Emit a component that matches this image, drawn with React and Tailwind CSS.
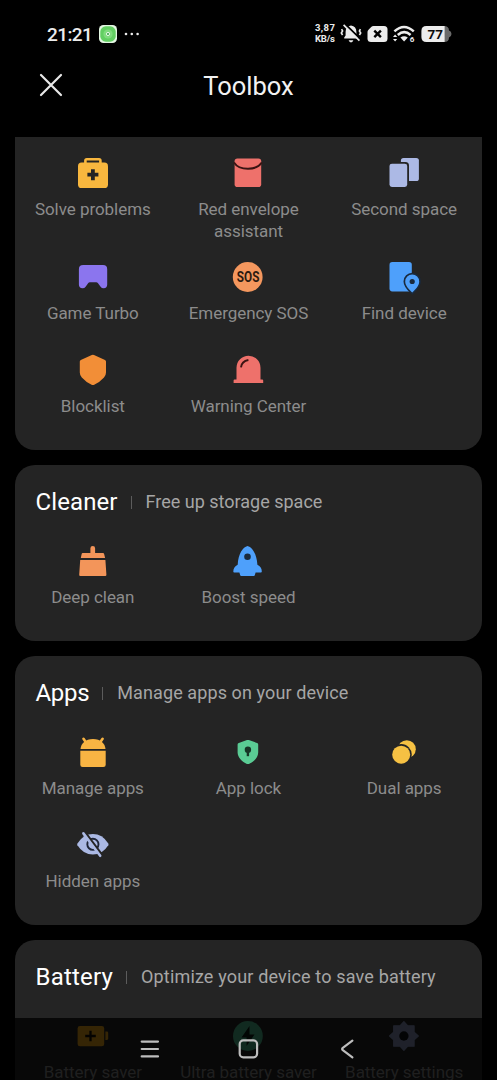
import React from "react";

const BG = "#242424";

function Icon({ children }) {
  return (
    <svg width="30" height="30" viewBox="0 0 30 30" className="block shrink-0 overflow-visible" fill="none">
      {children}
    </svg>
  );
}

const icons = {
  medkit: (
    <Icon>
      <path d="M7.4 6V2.6Q7.4 1.3 8.8 1.3H21Q22.4 1.3 22.4 2.6V6" stroke="#f8b73e" strokeWidth="2.6" />
      <rect x="0" y="4.6" width="30" height="25.4" rx="3.6" fill="#f8b73e" />
      <path d="M9.4 16.7H20.4M14.9 11.2V22.2" stroke={BG} strokeWidth="3.8" strokeLinecap="butt" />
    </Icon>
  ),
  envelope: (
    <Icon>
      <rect x="1.6" y="0.4" width="26.6" height="28.6" rx="2.8" fill="#ee716b" />
      <path d="M1 4.4Q5 10.7 15 10.7T28.8 4.6" stroke="#3a1413" strokeWidth="1.9" />
    </Icon>
  ),
  space: (
    <Icon>
      <rect x="11.9" y="0" width="18" height="23" rx="2.6" fill="#acb9e5" />
      <rect x="-1.3" y="4" width="21.3" height="26.8" rx="3.6" fill={BG} />
      <rect x="0.5" y="5.7" width="17.7" height="23.3" rx="2.4" fill="#acb9e5" />
    </Icon>
  ),
  game: (
    <Icon>
      <path
        d="M5.2 3H25Q29.2 3 29.2 7.2V22.6Q29.2 26.3 25.7 26.3Q23.6 26.3 22.6 24.8L20 21.2Q19.3 20.3 18.2 20.3H11.9Q10.8 20.3 10.1 21.2L7.6 24.8Q6.5 26.3 4.5 26.3Q0.9 26.3 0.9 22.6V7.2Q0.9 3 5.2 3Z"
        fill="#8b75ee"
      />
    </Icon>
  ),
  sos: (
    <Icon>
      <circle cx="14.7" cy="15" r="14.9" fill="#f4975e" />
      <text
        x="3.8"
        y="20.4"
        textLength="22.6"
        lengthAdjust="spacingAndGlyphs"
        className="font-[Roboto,sans-serif] text-[15.5px] font-bold"
        fill="#2c1a10"
      >
        SOS
      </text>
    </Icon>
  ),
  find: (
    <Icon>
      <rect x="0.5" y="0.1" width="22.3" height="29.3" rx="2.8" fill="#4ea0fb" />
      <path
        d="M23.2 30.4C20.5 28 16.2 24 16.2 19.5A7 7 0 0 1 30.2 19.5C30.2 24 26 28 23.2 30.4Z"
        fill="#4ea0fb"
        stroke="#1a2a3d"
        strokeWidth="3.4"
        paintOrder="stroke"
      />
      <circle cx="23.2" cy="19.5" r="2.6" fill="#1a2a3d" />
    </Icon>
  ),
  shield: (
    <Icon>
      <path
        d="M13.8 0Q14.9 -0.5 16 0L27 4.9Q28 5.4 28 6.6V17.5Q28 20.3 26 22.5Q22 27 16.2 29.7Q14.9 30.2 13.6 29.7Q7.8 27 3.8 22.5Q1.8 20.3 1.8 17.5V6.6Q1.8 5.4 2.8 4.9Z"
        fill="#f28e37"
      />
    </Icon>
  ),
  siren: (
    <Icon>
      <path
        d="M3.5 24.6V12.7A12 12 0 0 1 27.5 12.7V24.6H29.2Q30.2 24.6 30.2 25.6V27.9H0.6V25.6Q0.6 24.6 1.6 24.6Z"
        fill="#ee716b"
      />
      <path d="M8 12.3Q8.7 6.2 15.4 5" stroke="#3a1413" strokeWidth="1.9" />
    </Icon>
  ),
  broom: (
    <Icon>
      <path
        d="M3.6 8.2Q3.7 7 4.9 7H12.4V2.3A2.35 2.35 0 0 1 17.1 2.3V7H24.9Q26 7 26.2 8.2L27.1 12H2.8Z"
        fill="#f3955a"
      />
      <path d="M2.2 14H27.4L28.4 28.8Q28.4 30 27.3 30H2.3Q1.1 30 1.2 28.8Z" fill="#f3955a" />
    </Icon>
  ),
  rocket: (
    <Icon>
      <path
        d="M14.5 0C19 1 23.7 7.5 24.4 18.8Q28.8 21 28.8 25.5Q28.8 26.4 27.9 26.4H22.6L21.8 29.2Q21.6 30 20.8 30H8.2Q7.4 30 7.2 29.2L6.4 26.4H1.2Q0.3 26.4 0.3 25.5Q0.4 21 4.7 18.8C5.3 7.5 10 1 14.5 0Z"
        fill="#4ea0fb"
      />
      <circle cx="14.5" cy="10.7" r="3.3" fill="#1a2a3d" />
    </Icon>
  ),
  android: (
    <Icon>
      <path d="M5.5 1.8L8.4 6M24.6 1.8L21.7 6" stroke="#f8b443" strokeWidth="2.6" strokeLinecap="round" />
      <path d="M2.5 12C3 6.5 7.3 2 15 2S27 6.5 27.5 12Z" fill="#f8b443" />
      <path d="M2.3 13.8H27.7V27.7Q27.7 30 25.4 30H4.6Q2.3 30 2.3 27.7Z" fill="#f8b443" />
    </Icon>
  ),
  lock: (
    <Icon>
      <path
        d="M14 3.1Q14.9 2.8 15.8 3.1L24 5.9Q25.2 6.3 25.2 7.6V15.5C25.2 20.5 20.5 25 15.9 26.9Q14.9 27.3 13.9 26.9C9.2 25 4.6 20.5 4.6 15.5V7.6Q4.6 6.3 5.8 5.9Z"
        fill="#5acb94"
      />
      <circle cx="14.9" cy="12.8" r="3.2" fill="#173426" />
      <path d="M14.9 13V19.2" stroke="#173426" strokeWidth="2.4" />
    </Icon>
  ),
  dual: (
    <Icon>
      <circle cx="17.8" cy="12.2" r="9" fill="#f6c143" />
      <circle cx="12.2" cy="17.7" r="10.6" fill={BG} />
      <circle cx="12.2" cy="17.7" r="9" fill="#f6c143" />
    </Icon>
  ),
  hidden: (
    <Icon>
      <path
        d="M-0.6 15.2Q-1.1 14.3 -0.6 13.5Q5.5 4.1 14.9 4.1T30.3 13.5Q30.8 14.3 30.3 15.2Q24.3 24.6 14.9 24.6T-0.6 15.2Z"
        fill="#abb9e4"
      />
      <circle cx="14.9" cy="14.3" r="5.6" stroke="#1f2638" strokeWidth="1.9" />
      <path d="M7 2.2L24 25" stroke={BG} strokeWidth="2.6" />
      <path d="M5.4 3.4L22.2 25.8" stroke="#abb9e4" strokeWidth="2.6" strokeLinecap="round" />
    </Icon>
  ),
  battery: (
    <Icon>
      <rect x="-0.4" y="5" width="26.6" height="20.3" rx="2.4" fill="#f0a818" />
      <path d="M27.4 10.6H29Q30.2 10.6 30.2 12V17.6Q30.2 19 29 19H27.4Z" fill="#f0a818" />
      <path d="M7.2 15H17.8M12.5 9.7V20.3" stroke="#151005" strokeWidth="2.3" />
    </Icon>
  ),
  ultra: (
    <Icon>
      <circle cx="14.9" cy="15" r="14.9" fill="#50be91" />
      <path d="M16.5 5L8.5 16.5H13.6V25L21.5 13.5H16.5Z" fill="#0b1c15" />
    </Icon>
  ),
  gear: (
    <Icon>
      <path
        d="M14.9 0.6L18.8 4.8H25.1V11.1L29.3 15L25.1 18.9V25.2H18.8L14.9 29.4L11 25.2H4.7V18.9L0.5 15L4.7 11.1V4.8H11Z"
        fill="#8c98c0"
        stroke="#8c98c0"
        strokeWidth="1.2"
        strokeLinejoin="round"
      />
      <circle cx="14.9" cy="15" r="4.7" fill="#11131a" />
    </Icon>
  ),
};

function Tool({ icon, label }) {
  return (
    <div className="flex flex-col items-center">
      {icons[icon]}
      <div className="mt-[11px] text-center text-[17px] leading-[21.5px] tracking-[-0.05px] whitespace-pre text-[#8c8c8c]">
        {label}
      </div>
    </div>
  );
}

function Header({ title, text, titleTrack, textTrack }) {
  return (
    <div className="mb-[7px] flex h-[74px] items-center pl-[20.5px]">
      <h2 className={`text-[24px] leading-none whitespace-nowrap text-white ${titleTrack}`}>{title}</h2>
      <span className="ml-[13px] h-[13px] w-px bg-[#5c5c5c]" />
      <span className={`ml-[14px] text-[18px] leading-none whitespace-nowrap text-[#a6a6a6] ${textTrack}`}>
        {text}
      </span>
    </div>
  );
}

function StatusBar() {
  return (
    <div className="flex h-[50px] shrink-0 items-center pt-[18px] pl-[47px] text-[#ececec]">
      <span className="w-[52px] text-[19px] leading-none font-medium tracking-[-0.6px]">21:21</span>
      <svg width="18" height="18" viewBox="0 0 18 18">
        <rect width="18" height="18" rx="4.5" fill="#e4f7e3" />
        <rect x="1.3" y="1.3" width="15.4" height="15.4" rx="5.5" fill="#62cf62" />
        <circle cx="9" cy="9" r="4.6" fill="#7fdc7d" />
        <circle cx="9" cy="9" r="1.6" fill="#4aa957" stroke="#e4f7e3" strokeWidth="1" />
      </svg>
      <svg width="16" height="4" viewBox="0 0 16 4" className="ml-[7px]" fill="#ececec">
        <circle cx="2" cy="2" r="1.3" />
        <circle cx="7.8" cy="2" r="1.3" />
        <circle cx="13.6" cy="2" r="1.3" />
      </svg>
      <div className="-mt-[2px] ml-[175px] w-[25px] text-[9.5px] leading-[11px] font-bold whitespace-nowrap">
        <div className="tracking-[0.4px]">3,87</div>
        <div className="tracking-[-0.2px]">KB/s</div>
      </div>
      <svg width="22" height="20" viewBox="0 0 22 20" className="overflow-visible">
        <path d="M4.2 14.6V13.4L5.6 11.6V8Q5.6 2.6 11 1.6Q16.4 2.6 16.4 8V11.6L17.8 13.4V14.6Z" fill="#ececec" />
        <path d="M8.6 16.3H13.4Q12.8 18.4 11 18.4T8.6 16.3Z" fill="#ececec" />
        <path d="M1.6 5.2L2.6 7L1.3 9L2.6 11M20.4 5.2L19.4 7L20.7 9L19.4 11" stroke="#ececec" strokeWidth="1.6" fill="none" />
        <path d="M5 0L21 15.6" stroke="#000" strokeWidth="2" />
        <path d="M3.6 0.8L19.4 16.6" stroke="#ececec" strokeWidth="1.7" />
      </svg>
      <svg width="21" height="18" viewBox="0 0 21 18" className="ml-[5px]">
        <path d="M6.5 1H17Q20.5 1 20.5 4.5V13.5Q20.5 17 17 17H4Q0.5 17 0.5 13.5V7Q0.5 5.9 1.3 5L4.2 1.9Q5.1 1 6.5 1Z" fill="#ececec" />
        <path d="M7.3 5.6L13.9 12.2M13.9 5.6L7.3 12.2" stroke="#000" strokeWidth="2.4" />
      </svg>
      <svg width="23" height="18" viewBox="0 0 23 18" className="ml-[5px] overflow-visible">
        <path d="M1.4 6.4Q11 -2.4 20.8 6.4M4.8 10Q11.2 4.3 17.6 10" stroke="#ececec" strokeWidth="2.5" fill="none" />
        <path d="M7.4 12.6Q11.1 9.8 14.8 12.6L11.1 16.6Z" fill="#ececec" />
        <path d="M0 12L2.1 9.6L4.2 12ZM0 14L2.1 16.4L4.2 14Z" fill="#ececec" />
        <text x="16.7" y="17.4" fill="#ececec" className="font-[Roboto,sans-serif] text-[8px] font-bold">
          6
        </text>
      </svg>
      <svg width="31" height="18" viewBox="0 0 31 18" className="ml-[5px]">
        <path d="M23 1Q28 1 28 5.5Q30.5 6.3 30.5 9T28 12.5Q28 17 23 17Z" fill="#696969" />
        <path d="M5.4 1H23.6V17H5.4Q0.4 17 0.4 12V6Q0.4 1 5.4 1Z" fill="#ececec" />
        <text
          x="6.6"
          y="13.8"
          fill="#0a0a0a"
          className="font-[Roboto,sans-serif] text-[13.5px] font-bold"
          textLength="15.4"
          lengthAdjust="spacing"
        >
          77
        </text>
      </svg>
    </div>
  );
}

function NavBar() {
  return (
    <div className="absolute inset-x-0 bottom-0 flex h-[62px] bg-black/78">
      <svg width="497" height="62" viewBox="0 0 497 62" fill="none" stroke="#bdbdbd" strokeWidth="2.2" strokeLinecap="round" strokeLinejoin="round">
        <path d="M141.7 23.6H158M141.7 31H158M141.7 38.4H158" />
        <rect x="239.7" y="22.4" width="17.4" height="17" rx="3.6" />
        <path d="M352.4 22.6L342.8 29.8Q341.6 31 342.8 32.2L352.4 39.4" />
      </svg>
    </div>
  );
}

export default function App() {
  return (
    <div className="relative flex h-[1080px] w-[497px] flex-col overflow-hidden bg-black font-[Roboto,sans-serif]">
      <StatusBar />
      <header className="relative flex h-[87px] shrink-0 justify-center pt-[22px]">
        <svg width="24" height="24" viewBox="0 0 24 24" className="absolute top-[23px] left-[38.5px]">
          <path d="M2 2L22 22M22 2L2 22" stroke="#e8e8e8" strokeWidth="2.2" strokeLinecap="round" />
        </svg>
        <h1 className="text-[25.5px] leading-[29px] text-[#f2f2f2]">Toolbox</h1>
      </header>

      <main className="flex flex-col gap-[15px] px-[15px]">
        <section className="grid h-[313px] shrink-0 grid-cols-3 grid-rows-[104px_93px_93px] rounded-b-[20px] bg-[#242424] pt-[21px]">
          <Tool icon="medkit" label="Solve problems" />
          <Tool icon="envelope" label={"Red envelope\nassistant"} />
          <Tool icon="space" label="Second space" />
          <Tool icon="game" label="Game Turbo" />
          <Tool icon="sos" label="Emergency SOS" />
          <Tool icon="find" label="Find device" />
          <Tool icon="shield" label="Blocklist" />
          <Tool icon="siren" label="Warning Center" />
        </section>

        <section className="h-[176px] shrink-0 rounded-[20px] bg-[#242424]">
          <Header title="Cleaner" text="Free up storage space" titleTrack="tracking-[0.1px]" textTrack="tracking-[0px]" />
          <div className="grid grid-cols-3">
            <Tool icon="broom" label="Deep clean" />
            <Tool icon="rocket" label="Boost speed" />
          </div>
        </section>

        <section className="h-[269px] shrink-0 rounded-[20px] bg-[#242424]">
          <Header title="Apps" text="Manage apps on your device" titleTrack="tracking-[-0.3px]" textTrack="tracking-[0.1px]" />
          <div className="grid grid-cols-3 grid-rows-[93px_93px]">
            <Tool icon="android" label="Manage apps" />
            <Tool icon="lock" label="App lock" />
            <Tool icon="dual" label="Dual apps" />
            <Tool icon="hidden" label="Hidden apps" />
          </div>
        </section>

        <section className="h-[176px] shrink-0 rounded-[20px] bg-[#242424]">
          <Header title="Battery" text="Optimize your device to save battery" titleTrack="tracking-[0.2px]" textTrack="tracking-[0.16px]" />
          <div className="grid grid-cols-3">
            <Tool icon="battery" label="Battery saver" />
            <Tool icon="ultra" label="Ultra battery saver" />
            <Tool icon="gear" label="Battery settings" />
          </div>
        </section>
      </main>
      <NavBar />
    </div>
  );
}
